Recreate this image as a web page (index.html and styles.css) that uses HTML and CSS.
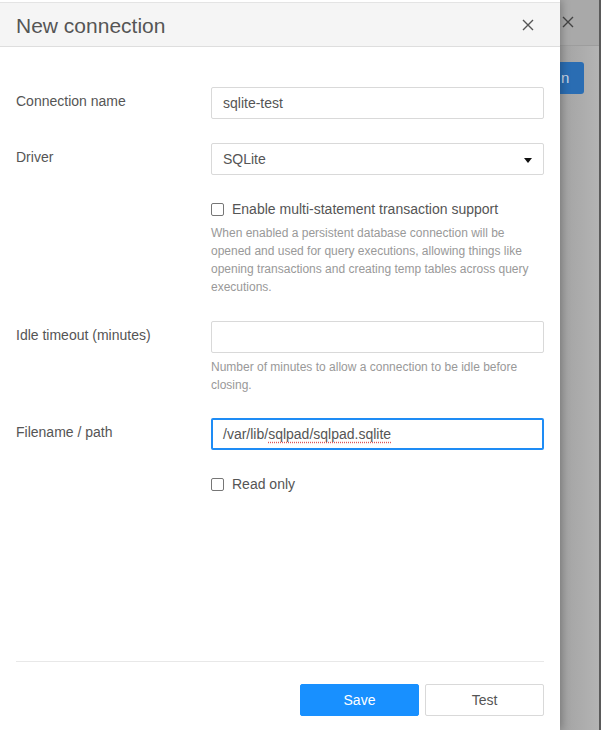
FILE: index.html
```html
<!DOCTYPE html>
<html>
<head>
<meta charset="utf-8">
<link rel="stylesheet" href="styles.css">
</head>
<body>
<div class="screen">
  <aside class="drawer">
    <header class="drawer-header">
      <h1 class="title">New connection</h1>
      <button class="close" aria-label="Close">
        <svg width="12" height="12" viewBox="0 0 12 12"><path d="M1 1L11 11M11 1L1 11" stroke="#555" stroke-width="1.4" fill="none"/></svg>
      </button>
    </header>
    <div class="drawer-body">
      <div class="row">
        <label class="label">Connection name</label>
        <div class="field"><div class="input">sqlite-test</div></div>
      </div>
      <div class="row">
        <label class="label">Driver</label>
        <div class="field">
          <div class="input select">SQLite<span class="caret"></span></div>
        </div>
      </div>
      <div class="row">
        <div class="label"></div>
        <div class="field">
          <div class="check"><span class="box"></span>Enable multi-statement transaction support</div>
          <p class="help help-long">When enabled a persistent database connection will be opened and used for query executions, allowing things like opening transactions and creating temp tables across query executions.</p>
        </div>
      </div>
      <div class="row">
        <label class="label">Idle timeout (minutes)</label>
        <div class="field">
          <div class="input"></div>
          <p class="help">Number of minutes to allow a connection to be idle before closing.</p>
        </div>
      </div>
      <div class="row">
        <label class="label">Filename / path</label>
        <div class="field"><div class="input focused">/var/lib/<span class="spell">sqlpad/sqlpad.sqlite</span></div></div>
      </div>
      <div class="row">
        <div class="label"></div>
        <div class="field"><div class="check"><span class="box"></span>Read only</div></div>
      </div>
    </div>
    <footer class="drawer-footer">
      <button class="btn primary">Save</button>
      <button class="btn">Test</button>
    </footer>
  </aside>
  <div class="backdrop">
    <div class="bg-header">
      <svg width="12" height="12" viewBox="0 0 12 12"><path d="M1 1L11 11M11 1L1 11" stroke="#444" stroke-width="1.4" fill="none"/></svg>
    </div>
    <div class="bg-body">
      <div class="bg-button">n</div>
    </div>
  </div>
</div>
</body>
</html>
```
FILE: styles.css
```css
* { box-sizing: border-box; }
html, body { margin: 0; padding: 0; }
body {
  font-family: "Liberation Sans", Arial, sans-serif;
  color: #555;
  background: #fff;
  width: 601px;
  height: 730px;
  overflow: hidden;
}
.screen {
  display: flex;
  height: 730px;
}
.drawer {
  width: 560px;
  flex: none;
  display: flex;
  flex-direction: column;
  background: #fff;
  padding-top: 2px;
  position: relative;
  z-index: 2;
  box-shadow: 2px 0 8px rgba(0,0,0,0.25);
}
.drawer-header {
  height: 45px;
  background: #f5f5f5;
  border-top: 1px solid #e4e4e4;
  border-bottom: 1px solid #dedede;
  display: flex;
  align-items: center;
  justify-content: space-between;
  padding: 0 16px;
}
.title {
  margin: 0;
  font-weight: normal;
  font-size: 21px;
  color: #555;
  padding-top: 2px;
}
.close {
  border: 0;
  background: none;
  padding: 0;
  margin-right: 8px;
  width: 16px;
  height: 16px;
  display: flex;
  align-items: center;
  justify-content: center;
}
.drawer-body {
  flex: 1;
  padding: 40px 16px 0 16px;
}
.row {
  display: flex;
  margin-bottom: 24px;
}
.label {
  width: 195px;
  flex: none;
  font-size: 14px;
  line-height: 20px;
  padding-top: 4px;
  color: #555;
}
.field {
  flex: 1;
}
.input {
  height: 32px;
  border: 1px solid #d9d9d9;
  border-radius: 2px;
  padding: 0 11px;
  font-size: 14px;
  line-height: 30px;
  color: #555;
  background: #fff;
  white-space: nowrap;
}
.select {
  display: flex;
  align-items: center;
  justify-content: space-between;
  padding-right: 11px;
}
.caret {
  width: 0;
  height: 0;
  border-left: 4.5px solid transparent;
  border-right: 4.5px solid transparent;
  border-top: 5px solid #111;
  margin-top: 2px;
}
.focused {
  border: 2px solid #1e8cf5;
  padding: 0 10px;
  line-height: 28px;
}
.spell {
  text-decoration: underline dotted #e05555;
  text-underline-offset: 3px;
}
.check {
  display: flex;
  align-items: center;
  font-size: 14px;
  line-height: 20px;
  color: #555;
}
.box {
  width: 13px;
  height: 13px;
  border: 1px solid #767676;
  border-radius: 2px;
  margin-right: 8px;
  background: #fff;
}
.help {
  margin: 5px 0 0 0;
  font-size: 12px;
  line-height: 18px;
  color: #999;
}
.help-long {
  margin-bottom: 1px;
}
.drawer-footer {
  margin: 0 16px;
  border-top: 1px solid #e8e8e8;
  padding: 22px 0 14px 0;
  display: flex;
  justify-content: flex-end;
  gap: 6px;
}
.btn {
  width: 119px;
  height: 32px;
  border: 1px solid #d9d9d9;
  border-radius: 2px;
  background: #fff;
  font-family: "Liberation Sans", Arial, sans-serif;
  font-size: 14px;
  color: #555;
  padding: 0;
}
.primary {
  background: #1890ff;
  border-color: #1890ff;
  color: #fff;
}
.backdrop {
  flex: 1;
  display: flex;
  flex-direction: column;
  border-right: 2px solid #5a5a5a;
}
.bg-header {
  height: 46px;
  background: #a9a9a9;
  border-bottom: 1px solid #9d9d9d;
  display: flex;
  align-items: center;
  padding-left: 2px;
  padding-bottom: 1px;
}
.bg-body {
  flex: 1;
  background: linear-gradient(to right, #a2a2a2, #b4b4b4);
  padding-top: 16px;
}
.bg-button {
  width: 24px;
  height: 32px;
  background: #2a6db3;
  border-radius: 0 3px 3px 0;
  color: #c9d6e6;
  font-size: 15px;
  line-height: 31px;
  padding-left: 1px;
}
```
